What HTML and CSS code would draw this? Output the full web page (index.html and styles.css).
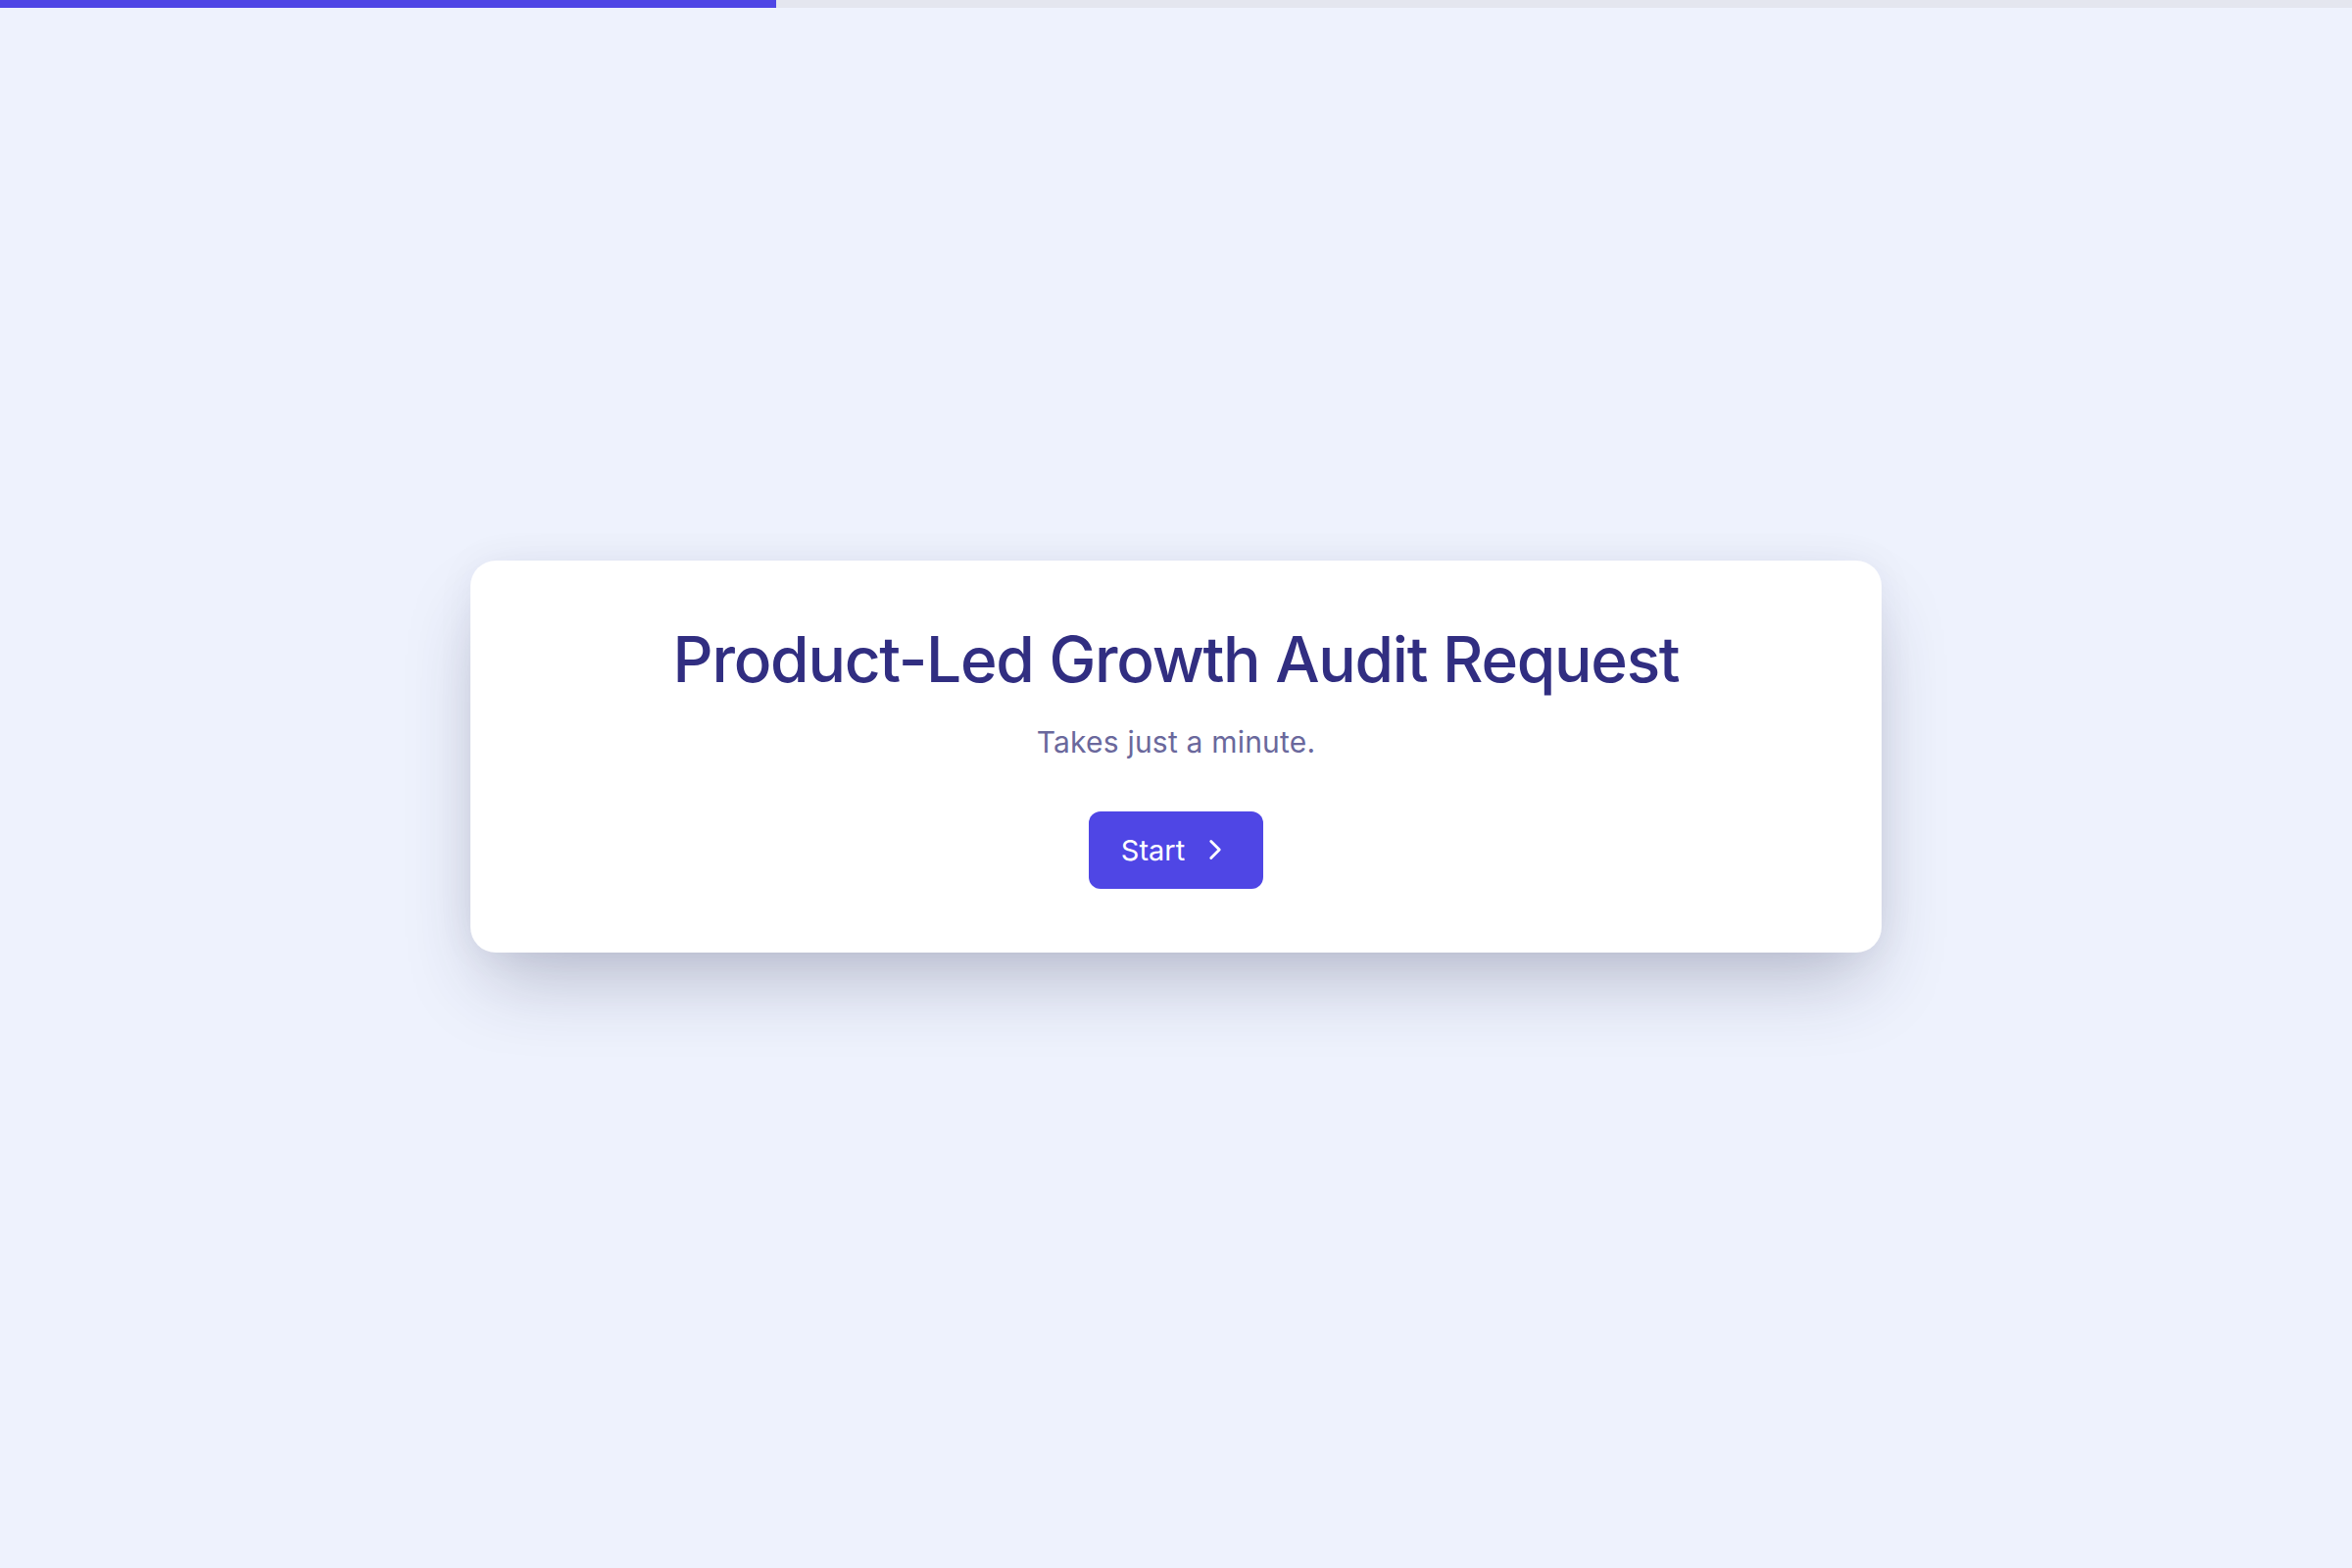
FILE: index.html
```html
<!DOCTYPE html>
<html lang="en">
<head>
    <meta charset="UTF-8">
    <meta name="viewport" content="width=device-width, initial-scale=1.0">
    <title>Product-Led Growth Audit Request</title>
    <link rel="stylesheet" href="styles.css">
</head>
<body>
    <div class="progress">
        <div class="progress-fill" style="width: 33%;"></div>
    </div>

    <main class="stage">
        <div class="card">
            <h1>Product-Led Growth Audit Request</h1>
            <p class="subtitle">Takes just a minute.</p>
            <button class="btn" type="button">
                <span>Start</span>
                <svg class="chevron" viewBox="0 0 24 24" fill="none" stroke="currentColor" stroke-width="2" stroke-linecap="round" stroke-linejoin="round">
                    <path d="m9 18 6-6-6-6"/>
                </svg>
            </button>
        </div>
    </main>
</body>
</html>
```

FILE: styles.css
```css
* {
    box-sizing: border-box;
}
html, body {
    height: 100%;
}
body {
    margin: 0;
    font-family: Inter, "Noto Sans", sans-serif;
    background: #eef2fd;
    display: flex;
    flex-direction: column;
}
.progress {
    height: 8px;
    background: #e4e6ef;
    flex-shrink: 0;
}
.progress-fill {
    height: 100%;
    background: #4f46e5;
}
.stage {
    flex: 1;
    display: flex;
    align-items: center;
    justify-content: center;
    padding-bottom: 64px;
}
.card {
    width: 1440px;
    height: 400px;
    background: white;
    border-radius: 26px;
    padding: 63px 48px 0;
    text-align: center;
    box-shadow: 0 40px 80px -16px rgba(40, 44, 80, 0.28), 0 0 40px rgba(40, 44, 80, 0.05);
}
h1 {
    margin: 0;
    font-size: 64px;
    line-height: 1.2;
    font-weight: 500;
    letter-spacing: -1.25px;
    color: #312e81;
}
.subtitle {
    margin: 24px 0 0;
    font-size: 30px;
    line-height: 1.4;
    letter-spacing: 0.2px;
    color: #6a689c;
}
.btn {
    margin-top: 50px;
    display: inline-flex;
    align-items: center;
    gap: 14px;
    height: 79px;
    padding: 0 32px 0 33px;
    background: #4f46e5;
    color: white;
    border: none;
    border-radius: 12px;
    font-family: inherit;
    font-size: 29px;
    cursor: pointer;
}
.btn:hover {
    background: #4338ca;
}
.chevron {
    width: 34px;
    height: 34px;
}
```
